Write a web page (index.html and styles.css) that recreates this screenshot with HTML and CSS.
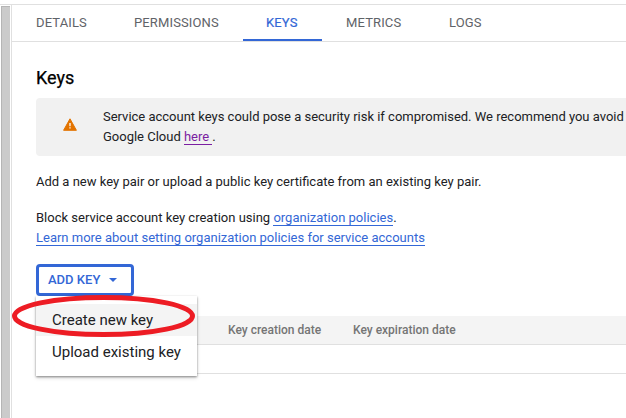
FILE: index.html
```html
<!DOCTYPE html>
<html lang="en">
<head>
<meta charset="utf-8">
<title>Service account keys</title>
<link rel="stylesheet" href="styles.css">
</head>
<body>
<div class="topbar"></div>
<div class="shell">
  <div class="scroll-gutter"><div class="scroll-thumb"></div></div>
  <main class="panel">
    <nav class="tabs">
      <a class="tab tab-details">DETAILS</a>
      <a class="tab tab-permissions">PERMISSIONS</a>
      <a class="tab tab-keys active">KEYS</a>
      <a class="tab tab-metrics">METRICS</a>
      <a class="tab tab-logs">LOGS</a>
    </nav>
    <section class="content">
      <h1 class="title">Keys</h1>
      <div class="banner">
        <svg class="warning" width="14" height="13" viewBox="0 0 14 13"><path d="M7 0.8 13.4 12.3H.6Z" fill="#e37400" stroke="#e37400" stroke-width="1" stroke-linejoin="round"/><path d="M7 5v3.2M7 9.2v1.4" stroke="#fff" stroke-width="1.3"/></svg>
        <p class="banner-text">Service account keys could pose a security risk if compromised. We recommend you avoid<br>Google Cloud <a class="visited">here </a>.</p>
      </div>
      <p class="intro">Add a new key pair or upload a public key certificate from an existing key pair.</p>
      <p class="policy">Block service account key creation using <a class="link">organization policies</a>.<br><a class="link">Learn more about setting organization policies for service accounts</a></p>
      <div class="add-key">
        <button class="add-button">ADD KEY<span class="caret"></span></button>
        <div class="menu">
          <div class="menu-item selected">Create new key</div>
          <div class="menu-item">Upload existing key</div>
        </div>
        <svg class="annotation" width="185" height="44" viewBox="0 0 185 44"><ellipse cx="92.5" cy="22" rx="89" ry="18.6" fill="none" stroke="#ed1c24" stroke-width="5"/></svg>
      </div>
      <div class="table">
        <div class="table-head"><span class="col-created">Key creation date</span><span class="col-expires">Key expiration date</span></div>
        <div class="table-row"></div>
      </div>
    </section>
  </main>
</div>
</body>
</html>
```
FILE: styles.css
```css
* { box-sizing: border-box; }
body {
  margin: 0;
  height: 418px;
  overflow: hidden;
  background: #fff;
  color: #202124;
  font: 13px/20px Roboto, sans-serif;
}
p, h1 { margin: 0; }
.topbar { height: 5px; border-bottom: 1px solid #e0e0e0; }
.shell { display: flex; height: 413px; }
.scroll-gutter { width: 12px; padding: 1px 0 0 1px; border-right: 1px solid #e0e0e0; }
.scroll-thumb {
  width: 9px;
  height: 412px;
  background: #cbcbcb;
  border-top: 1px solid #b5b5b5;
  border-left: 1px solid #b5b5b5;
}
.panel { flex: 1; min-width: 0; }
.tabs {
  display: flex;
  height: 37px;
  border-bottom: 1px solid #e0e0e0;
  color: #5f6368;
  line-height: 35px;
  letter-spacing: .13px;
}
.tab { padding-left: 24px; white-space: nowrap; }
.tab-details { width: 98px; }
.tab-permissions { width: 133px; }
.tab-keys { width: 79px; padding-left: 23px; }
.tab-metrics { width: 103px; }
.active { height: 36px; color: #3367d6; border-bottom: 2px solid #3367d6; -webkit-text-stroke: .2px #3367d6; }
.content { padding-left: 24px; }
.title { padding-top: 24px; height: 56px; font-size: 18px; line-height: 24px; font-weight: 400; color: #000; -webkit-text-stroke: .25px #000; }
.banner {
  display: flex;
  height: 58px;
  padding: 9px 0 0 27px;
  background: #f1f1f1;
  border-radius: 4px 0 0 4px;
}
.warning { margin: 11px 26px 0 0; flex: none; }
.banner-text { white-space: nowrap; color: #202124; letter-spacing: -.008px; }
.link, .visited { display: inline-block; line-height: 15px; white-space: pre; border-bottom: 1px solid #3367d6; color: #3367d6; }
.visited { color: #7b1fa2; border-color: #7b1fa2; }
.intro { margin-top: 16px; }
.policy { margin-top: 16px; }
.add-key { position: relative; margin-top: 16px; height: 32px; }
.add-button {
  display: flex;
  align-items: center;
  width: 98px;
  height: 32px;
  padding: 0 0 0 9px;
  border: 3px solid #3367d6;
  border-radius: 4px;
  background: #fff;
  color: #3367d6;
  font: 500 13px/20px Roboto, sans-serif;
}
.caret {
  margin-left: 9px;
  border: 4px solid transparent;
  border-top-color: #3367d6;
  border-bottom: 0;
}
.menu {
  position: absolute;
  z-index: 1;
  top: 32px;
  left: 0;
  width: 161px;
  height: 80px;
  padding: 8px 0;
  background: #fff;
  box-shadow: 0 1px 2px rgba(0, 0, 0, .4), 0 2px 4px rgba(0, 0, 0, .14);
}
.menu-item { height: 32px; padding-left: 16px; font-size: 15px; line-height: 32px; white-space: nowrap; }
.selected { background: #f4f4f4; }
.annotation { position: absolute; z-index: 2; left: -25px; top: 30px; }
.table { margin-top: 20px; }
.table-head {
  display: flex;
  height: 29px;
  padding-left: 192px;
  border-bottom: 1px solid #e0e0e0;
  background: #f4f4f4;
  color: #757575;
  font-size: 12px;
  line-height: 28px;
  font-weight: 500;
}
.col-created { width: 125px; }
.table-row { height: 29px; border-bottom: 1px solid #e0e0e0; }
```
